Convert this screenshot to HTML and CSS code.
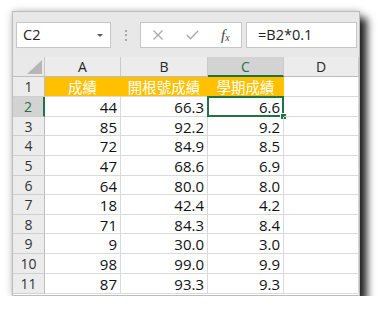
FILE: index.html
```html
<!DOCTYPE html>
<html lang="zh-Hant">
<head>
<meta charset="utf-8">
<title>Excel</title>
<link rel="stylesheet" href="styles.css">
</head>
<body>
<div class="window">
  <div class="toolbar">
    <div class="namebox"><span class="ref">C2</span><span class="caret"></span></div>
    <div class="grip"><i></i><i></i><i></i></div>
    <div class="btns">
      <svg class="ico" width="12" height="10" viewBox="0 0 12 10"><path d="M1.5 0.5 L10.5 9.5 M10.5 0.5 L1.5 9.5" stroke="#a8a8a8" stroke-width="1.3" fill="none"/></svg>
      <svg class="ico" width="13" height="10" viewBox="0 0 13 10"><path d="M0.8 5 L4.5 8.8 L12.2 0.8" stroke="#a8a8a8" stroke-width="1.3" fill="none"/></svg>
      <span class="fx"><i>f</i><sub>x</sub></span>
    </div>
    <div class="formula">=B2*0.1</div>
  </div>
  <div class="sheet">
    <div class="corner"><span class="tri"></span></div>
    <div class="ch">A</div><div class="ch">B</div><div class="ch sel">C</div><div class="ch">D</div>

    <div class="rh">1</div><div class="c hd">成績</div><div class="c hd">開根號成績</div><div class="c hd">學期成績</div><div class="c"></div>
    <div class="rh sel">2</div><div class="c">44</div><div class="c">66.3</div><div class="c active">6.6<span class="selbox"><span class="handle"></span></span></div><div class="c"></div>
    <div class="rh">3</div><div class="c">85</div><div class="c">92.2</div><div class="c">9.2</div><div class="c"></div>
    <div class="rh">4</div><div class="c">72</div><div class="c">84.9</div><div class="c">8.5</div><div class="c"></div>
    <div class="rh">5</div><div class="c">47</div><div class="c">68.6</div><div class="c">6.9</div><div class="c"></div>
    <div class="rh">6</div><div class="c">64</div><div class="c">80.0</div><div class="c">8.0</div><div class="c"></div>
    <div class="rh">7</div><div class="c">18</div><div class="c">42.4</div><div class="c">4.2</div><div class="c"></div>
    <div class="rh">8</div><div class="c">71</div><div class="c">84.3</div><div class="c">8.4</div><div class="c"></div>
    <div class="rh">9</div><div class="c">9</div><div class="c">30.0</div><div class="c">3.0</div><div class="c"></div>
    <div class="rh">10</div><div class="c">98</div><div class="c">99.0</div><div class="c">9.9</div><div class="c"></div>
    <div class="rh">11</div><div class="c">87</div><div class="c">93.3</div><div class="c">9.3</div><div class="c"></div>
  </div>
</div>
</body>
</html>
```

FILE: styles.css
```css
html, body {
  margin: 0;
  padding: 0;
  background: #ffffff;
}
body {
  padding: 11px 0 0 12px;
  font-family: "Open Sans", "Noto Sans CJK TC", sans-serif;
}
.window {
  width: 348px;
  height: 285px;
  box-sizing: border-box;
  border: 1px solid #bcbcbc;
  background: #ffffff;
  box-shadow: 7px 7px 8px rgba(0, 0, 0, 0.85), 0 0 7px rgba(0, 0, 0, 0.25);
  display: flex;
  flex-direction: column;
  overflow: hidden;
}
.toolbar {
  height: 45px;
  box-sizing: border-box;
  background: #e8e8e8;
  display: flex;
  align-items: flex-start;
  padding: 10px 2px 0 3px;
}
.namebox {
  width: 95px;
  height: 26px;
  box-sizing: border-box;
  background: #ffffff;
  border: 1px solid #c6c6c6;
  display: flex;
  align-items: center;
  justify-content: space-between;
  padding: 0 7px 0 6px;
}
.ref, .formula {
  font-size: 14.5px;
  color: #222222;
  line-height: 20px;
}
.caret {
  width: 0;
  height: 0;
  border-left: 3px solid transparent;
  border-right: 3px solid transparent;
  border-top: 3px solid #595959;
}
.grip {
  width: 29px;
  height: 26px;
  display: flex;
  flex-direction: column;
  align-items: center;
  justify-content: center;
  gap: 2.5px;
}
.grip i {
  width: 2px;
  height: 2px;
  background: #a9a9a9;
  display: block;
}
.btns {
  width: 102px;
  height: 26px;
  box-sizing: border-box;
  background: #ffffff;
  border: 1px solid #c6c6c6;
  display: flex;
  align-items: center;
  padding: 0 0 0 11px;
  gap: 22px;
}
.ico {
  display: block;
}
.fx {
  font-family: "Liberation Serif", serif;
  font-size: 15px;
  color: #444444;
  line-height: 1;
}
.fx i {
  font-style: italic;
}
.fx sub {
  font-size: 10px;
  font-style: italic;
  vertical-align: -1px;
}
.formula {
  flex: 1;
  height: 26px;
  box-sizing: border-box;
  background: #ffffff;
  border: 1px solid #c6c6c6;
  margin-left: 4px;
  padding: 2px 0 0 11px;
}
.sheet {
  display: grid;
  grid-template-columns: 32px 76px 87px 76px 75px;
  grid-template-rows: 20px 20px 20px 19px 20px 20px 19px 20px 19px 20px 20px 20px;
}
.sheet > div {
  box-sizing: border-box;
  border-right: 1px solid #dadada;
  border-bottom: 1px solid #dadada;
  position: relative;
}
.corner {
  background: #e9e9e9;
  border-right-color: #c6c6c6 !important;
  border-bottom-color: #bdbdbd !important;
}
.tri {
  position: absolute;
  right: 2px;
  bottom: 2px;
  width: 0;
  height: 0;
  border-left: 15px solid transparent;
  border-bottom: 14px solid #b7b7b7;
}
.ch {
  background: #ececec;
  border-right-color: #cacaca !important;
  border-bottom-color: #bdbdbd !important;
  text-align: center;
  font-size: 14px;
  line-height: 19px;
  color: #262626;
}
.ch.sel {
  background: #d3d3d3;
  color: #217346;
  border-bottom: 2px solid #217346 !important;
}
.rh {
  background: #ececec;
  border-right-color: #bdbdbd !important;
  border-bottom-color: #cfcfcf !important;
  text-align: center;
  font-size: 14px;
  line-height: 20px;
  color: #333333;
}
.rh.sel {
  background: #d3d3d3;
  color: #217346;
  border-right: 2px solid #217346 !important;
}
.c {
  text-align: right;
  padding-right: 3px;
  font-size: 15px;
  line-height: 20px;
  color: #111111;
}
.c.hd {
  background: #ffc000;
  border-right-color: #ffc000 !important;
  color: #ffffff;
  text-align: center;
  padding-right: 0;
  font-family: "Noto Sans CJK TC", sans-serif;
  font-size: 14.5px;
  line-height: 19px;
}
.selbox {
  position: absolute;
  left: -1px;
  top: -1px;
  right: -1px;
  bottom: -1px;
  border: 2px solid #217346;
  pointer-events: none;
}
.handle {
  position: absolute;
  right: -5px;
  bottom: -5px;
  width: 5px;
  height: 5px;
  background: #217346;
  border: 1px solid #ffffff;
}
```
